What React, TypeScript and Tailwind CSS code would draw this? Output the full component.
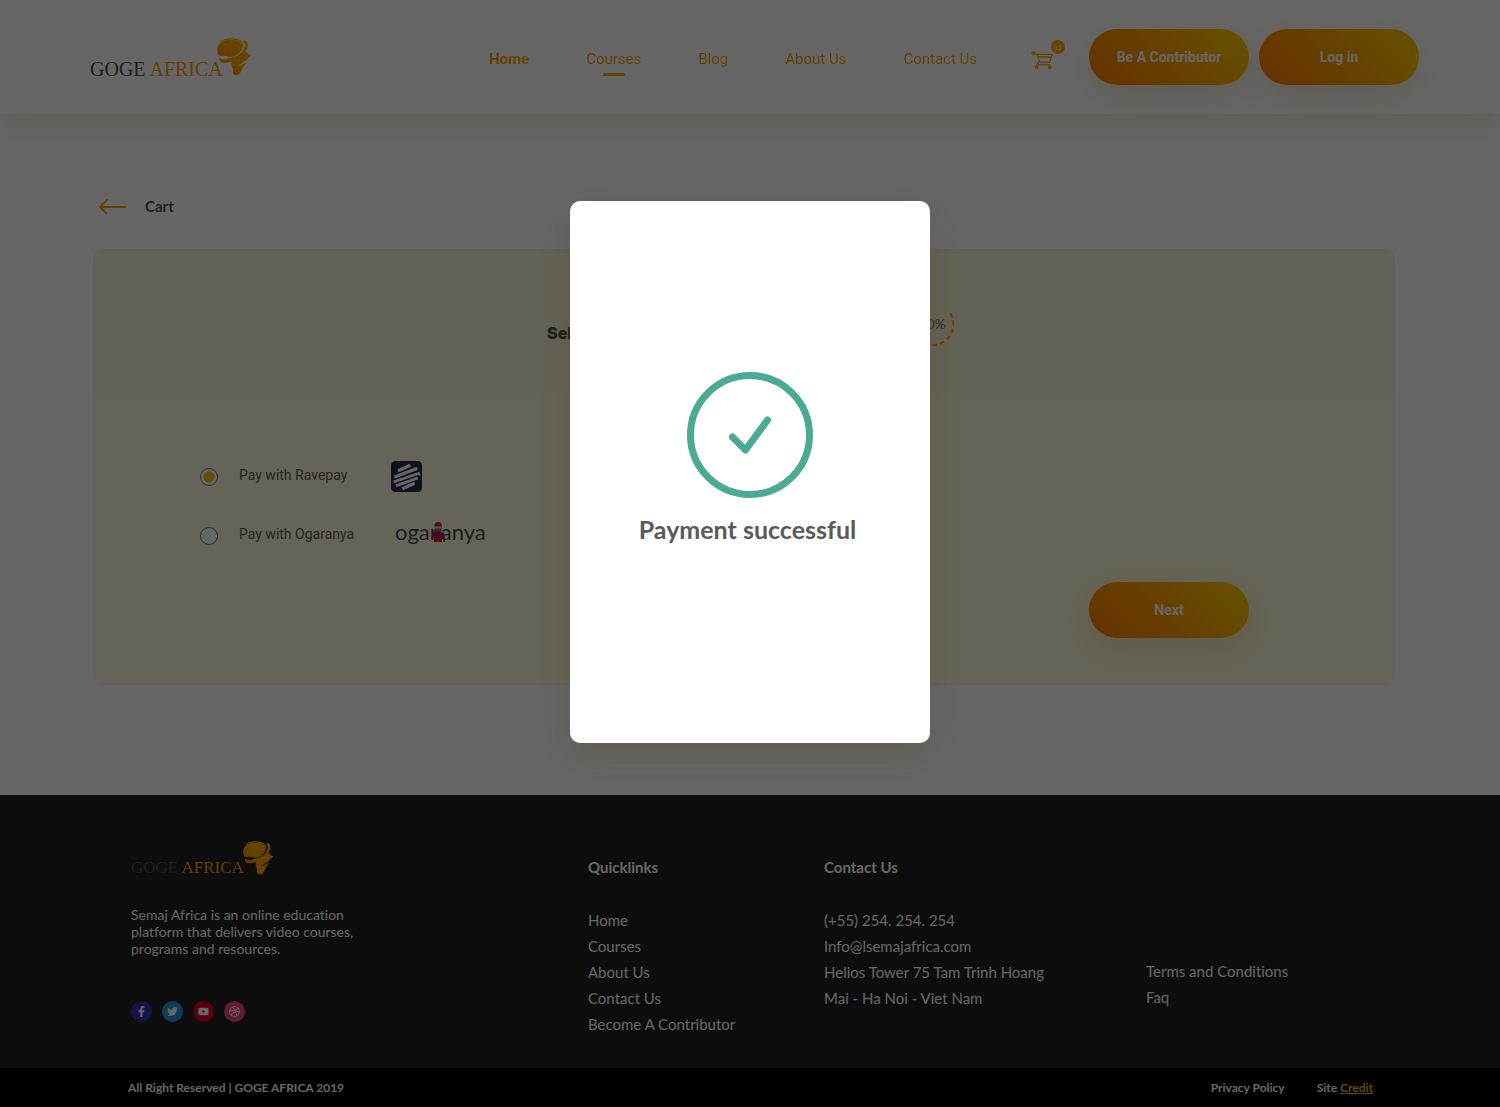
import React from "react";
import { FaDribbble, FaFacebookF, FaTwitter, FaYoutube } from "react-icons/fa";

const gradientText =
  "bg-linear-to-r from-[#f58a00] to-[#ffb300] bg-clip-text text-transparent";

const pillButton =
  "h-14 w-40 shrink-0 rounded-full bg-[linear-gradient(45deg,#ff7a00,#ffcc00)] font-['Roboto',sans-serif] text-sm font-bold text-white shadow-[0_10px_30px_rgba(165,124,0,0.2)]";

function AfricaHead({ className, id }: { className: string; id: string }) {
  return (
    <svg viewBox="405 52 110 118" className={className} aria-hidden="true">
      <defs>
        <linearGradient id={id} x1="0" y1="1" x2="1" y2="0">
          <stop offset="0" stopColor="#ff8f00" />
          <stop offset="1" stopColor="#ffb800" />
        </linearGradient>
      </defs>
      <g fill={`url(#${id})`}>
        <path d="M411 103C404 82 413 66 432 60C456 54 478 60 487 71C490 86 478 102 460 109C449 113 444 108 430 107C422 108 414 109 411 103Z" />
        <path d="M414 66C426 51 464 47 486 63C488 65 489 67 489 70C474 54 436 53 414 66Z" />
        <path d="M415 113C419 118 431 120 443 115C466 112 489 99 493 79C495 70 491 66 488 61C493 56 501 61 503 70C504 80 500 87 496 92L502 100L514 107C506 112 502 117 499 120L474 137L476 139L499 127C495 136 489 141 485 148C480 158 479 166 468 168C456 168 455 158 457 149C453 141 450 134 453 125C443 129 430 131 421 128C415 124 413 119 415 113Z" />
      </g>
    </svg>
  );
}

function CartIcon() {
  return (
    <svg viewBox="782 88 66 58" className="h-5 w-[22px]" fill="none" stroke="#ffa200" strokeWidth="4" strokeLinejoin="round" aria-hidden="true">
      <circle cx="789" cy="97" r="4" />
      <path d="M793 98L801 101L808 124H838L845 100H801M804 108H842M800 131H840M805 124L799 131" />
      <circle cx="799" cy="139" r="4" />
      <circle cx="838" cy="139" r="4" />
    </svg>
  );
}

function RaveLogo() {
  return (
    <svg viewBox="0 0 93 93" className="size-[31px]" role="img" aria-label="Ravepay">
      <rect width="93" height="93" rx="13" fill="#2b2850" />
      <g stroke="#fff" strokeWidth="10">
        <path d="M21 29L58 13M10 49L79 22M8 63L87 37M15 74L80 50M34 83L71 67" stroke="#fff" />
      </g>
      <path d="M8 56L84 28M10 69L84 43" stroke="#2b2850" strokeWidth="4" />
    </svg>
  );
}

function OgaranyaLogo() {
  return (
    <span className="flex items-center font-['Lato',sans-serif] text-[22px] leading-6 text-[#4a4a4a]">
      <span>ogar</span>
      <svg viewBox="0 0 42 64" className="-mr-1 -ml-[7px] h-[22px] w-[14px]" aria-hidden="true">
        <path d="M10 14Q10 2 21 2Q33 2 33 14Z" fill="#d8232f" />
        <path d="M11 13H32V26Q30 36 21 36Q13 36 11 26Z" fill="#a3684c" />
        <path d="M12 16H31V21H12Z" fill="#f0dada" />
        <path d="M3 35L13 31H29L39 35L41 52H34L33 44V58H9V44L8 51H1Z" fill="#a3125c" />
        <path d="M9 48H33V62H23L21 57L19 62H8Z" fill="#e3142f" />
        <path d="M39 46V62" stroke="#403030" strokeWidth="4" />
      </svg>
      <span>anya</span>
    </span>
  );
}

const navItems = ["Home", "Courses", "Blog", "About Us", "Contact Us"];
const quickLinks = ["Home", "Courses", "About Us", "Contact Us", "Become A Contributor"];
const socials = [
  { name: "Facebook", Icon: FaFacebookF, color: "bg-[#3333b8]" },
  { name: "Twitter", Icon: FaTwitter, color: "bg-[#1d96dd]" },
  { name: "YouTube", Icon: FaYoutube, color: "bg-[#dc0022]" },
  { name: "Dribbble", Icon: FaDribbble, color: "bg-[#f04676]" },
];

function Header() {
  return (
    <header className="relative flex h-[114px] items-start bg-white pr-[81px] pl-[90px] shadow-[0_10px_30px_rgba(165,124,0,0.2)]">
      <a href="#" className="flex pt-[38px] font-['Liberation_Serif',serif] text-xl leading-5">
        <span className="pt-[21px] text-[#4f4f4f]">
          GOGE <span className="text-[#f79a10]">AFRICA</span>
        </span>
        <AfricaHead id="head-top" className="-ml-[7px] h-[38px] w-9" />
      </a>
      <nav className="ml-auto flex gap-[57px] pt-[49px] font-['Roboto',sans-serif] text-[15px] leading-5">
        {navItems.map((item) => (
          <a key={item} href="#" className={item === "Home" ? "font-bold" : ""}>
            <span className={gradientText}>{item}</span>
            {item === "Courses" && (
              <span className="mx-auto mt-1 block h-[3px] w-[22px] rounded-full bg-[#f5aa00]" />
            )}
          </a>
        ))}
      </nav>
      <button type="button" aria-label="Cart" className="relative mt-[50px] ml-[54px]">
        <CartIcon />
        <span className="absolute -top-[10px] -right-3 flex size-[14px] items-center justify-center rounded-full bg-[#ffa800] font-['Lato',sans-serif] text-[6px] text-white">
          12
        </span>
      </button>
      <div className="mt-[29px] ml-9 flex gap-[10px]">
        <button type="button" className={pillButton}>Be A Contributor</button>
        <button type="button" className={pillButton}>Log in</button>
      </div>
    </header>
  );
}

function PaymentOption({ label, checked, children }: { label: string; checked?: boolean; children: React.ReactNode }) {
  return (
    <label className="flex h-[31px] items-center">
      <input
        type="radio"
        name="method"
        defaultChecked={checked}
        className="size-[18px] appearance-none rounded-full border border-[#707070] bg-white checked:bg-[radial-gradient(circle,#ffbf00_5px,#fff_6px)]"
      />
      <span className="ml-[21px] w-[152px] pb-1 font-['Roboto',sans-serif] text-sm text-[#606060]">{label}</span>
      {children}
    </label>
  );
}

function Checkout() {
  return (
    <main className="pt-[82px] pr-[105px] pb-[110px] pl-[93px]">
      <a href="#" className="ml-1.5 flex h-5 w-fit items-center gap-[19px] text-[15px] font-bold text-[#505050]">
        <svg viewBox="0 0 27 15" className="h-[15px] w-[27px]" fill="none" strokeWidth="2" strokeLinecap="round" strokeLinejoin="round" aria-hidden="true">
          <path d="M7 14L1 8H26" stroke="#ff9a00" />
          <path d="M8 1L1 8" stroke="#ffb400" />
        </svg>
        Cart
      </a>
      <section className="mt-[33px] overflow-hidden rounded-[10px] border border-[#f0f0f0] bg-[#fffadb]">
        <div className="flex h-[145px] justify-center bg-[#fbf6d8] pl-[13px]">
          <div className="flex w-[407px] items-center justify-between pt-5">
            <h1 className="font-['Inter',sans-serif] text-base font-black text-[#505050]">Select payment method</h1>
            <div className="relative mb-[18px] flex size-11 items-center justify-center">
              <svg viewBox="0 0 44 44" className="absolute inset-0" fill="none" aria-hidden="true">
                <path d="M40 11A21 21 0 0 1 11 40" stroke="#ff9f00" strokeWidth="2" strokeDasharray="5 3" />
              </svg>
              <span className="text-sm text-[#707070]">50%</span>
            </div>
          </div>
        </div>
        <form className="flex h-[289px] items-start justify-between pr-[145px] pl-[106px]">
          <div className="flex flex-col gap-7 pt-[66px]">
            <PaymentOption label="Pay with Ravepay" checked>
              <RaveLogo />
            </PaymentOption>
            <PaymentOption label="Pay with Ogaranya">
              <span className="ml-1 pb-2">
                <OgaranyaLogo />
              </span>
            </PaymentOption>
          </div>
          <button type="button" className={`mt-[187px] ${pillButton}`}>Next</button>
        </form>
      </section>
    </main>
  );
}

function Footer() {
  return (
    <footer className="bg-[#212121] text-[15px] leading-[26px] text-white">
      <div className="grid h-[273px] grid-cols-[457fr_236fr_322fr_223fr] px-[131px]">
        <div className="pt-[46px]">
          <a href="#" className="flex font-['Liberation_Serif',serif] text-[17px] leading-5">
            <span className="pt-[17px] text-[#4f4f4f]">
              GOGE <span className="text-[#f79a10]">AFRICA</span>
            </span>
            <AfricaHead id="head-bottom" className="-ml-0.5 h-[34px] w-8" />
          </a>
          <p className="mt-7 w-[240px] text-[14px] leading-[17px]">
            Semaj Africa is an online education platform that delivers video courses, programs and resources.
          </p>
          <div className="mt-11 flex gap-[10px]">
            {socials.map(({ name, Icon, color }) => (
              <a key={name} href="#" aria-label={name} className={`flex size-[21px] items-center justify-center rounded-full ${color}`}>
                <Icon className="size-[11px]" />
              </a>
            ))}
          </div>
        </div>
        <div className="pt-[59px]">
          <h2 className="font-bold">Quicklinks</h2>
          <ul className="mt-[27px]">
            {quickLinks.map((link) => (
              <li key={link}>
                <a href="#">{link}</a>
              </li>
            ))}
          </ul>
        </div>
        <div className="pt-[59px]">
          <h2 className="font-bold">Contact Us</h2>
          <address className="mt-[27px] flex flex-col whitespace-nowrap not-italic">
            <a href="#">(+55) 254. 254. 254</a>
            <a href="#">Info@lsemajafrica.com</a>
            <span>Helios Tower 75 Tam Trinh Hoang</span>
            <span>Mai - Ha Noi - Viet Nam</span>
          </address>
        </div>
        <div className="flex flex-col items-start pt-[163px]">
          <a href="#">Terms and Conditions</a>
          <a href="#">Faq</a>
        </div>
      </div>
      <div className="flex h-[39px] items-center bg-black pr-[127px] pl-32 text-xs font-bold">
        <span>All Right Reserved | GOGE AFRICA 2019</span>
        <a href="#" className="ml-auto">Privacy Policy</a>
        <span className="ml-8">
          Site <a href="#" className="text-[#ffb800] underline">Credit</a>
        </span>
      </div>
    </footer>
  );
}

function SuccessDialog() {
  return (
    <div className="absolute inset-0 flex items-start justify-center bg-black/60 pt-[201px]">
      <div
        role="dialog"
        aria-modal="true"
        aria-labelledby="dialog-title"
        className="flex h-[542px] w-[360px] flex-col items-center rounded-[10px] bg-white pt-[170px] shadow-[0_10px_30px_rgba(85,55,0,0.2)]"
      >
        <svg viewBox="0 0 128 128" className="size-32" fill="none" stroke="#4baa94" strokeWidth="7" strokeLinecap="round" strokeLinejoin="round" aria-hidden="true">
          <circle cx="64" cy="64" r="59.5" />
          <path d="M46.500 66L59.500 79L81.500 49" />
        </svg>
        <h2 id="dialog-title" className="mt-3 pr-[5px] text-[25px] leading-9 font-bold text-[#5a5a5a]">Payment successful</h2>
      </div>
    </div>
  );
}

export default function App() {
  return (
    <div className="relative min-h-screen bg-white font-['Lato',sans-serif] [font-variant-ligatures:none]">
      <Header />
      <Checkout />
      <Footer />
      <SuccessDialog />
    </div>
  );
}
